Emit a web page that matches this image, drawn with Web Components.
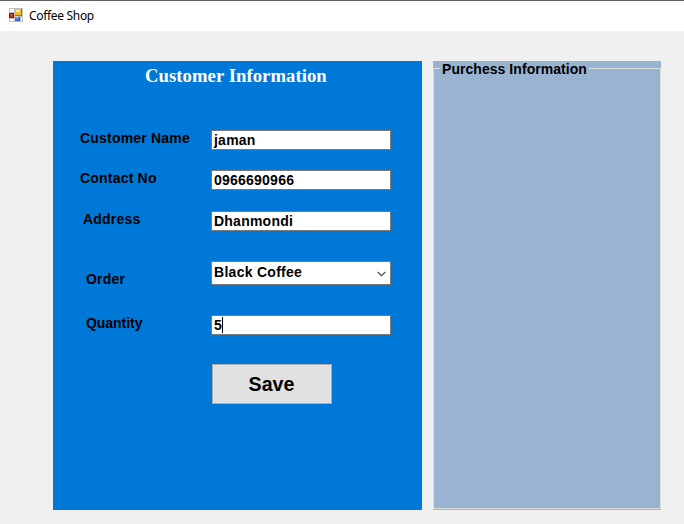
<!DOCTYPE html>
<html lang="en"><head><meta charset="utf-8"><title>Coffee Shop</title>
<style>html,body{margin:0;height:100%;overflow:hidden;background:#f0f0f0}</style></head>
<body><coffee-window></coffee-window>
<script>
const define=(name,html,init)=>customElements.define(name,class extends HTMLElement{
  constructor(){super();const t=document.createElement('template');t.innerHTML=html;
    this.attachShadow({mode:'open'}).append(t.content.cloneNode(true));}
  connectedCallback(){if(init)init(this);}
});

define('title-bar',`<style>
:host{display:flex;height:31px;box-sizing:border-box;border-top:1px solid #626067;background:#fff;padding-left:9px;gap:6px;font:12px/30px "Noto Sans","Open Sans",sans-serif;color:#000}
svg{display:block;margin-top:7px;width:14px;height:14px;flex:none}
span{display:block;white-space:nowrap;letter-spacing:-.32px}
</style>
<svg viewBox="0 0 14 14" shape-rendering="crispEdges">
<rect width="14" height="14" fill="#c0c0c0"/>
<rect x="1" y="1" width="4" height="3" fill="#fff"/><rect x="1" y="11" width="4" height="2" fill="#fff"/><rect x="12" y="9" width="1" height="4" fill="#fff"/>
<rect x="0" y="5" width="5" height="5" fill="#8f1414"/><rect x="1" y="6" width="3" height="3" fill="#d5331f"/><rect x="2" y="6" width="1" height="1" fill="#f08a68"/>
<rect x="6" y="1" width="7" height="7" fill="#a87a08"/><rect x="6" y="1" width="6" height="6" fill="#f4bd24"/><rect x="7" y="2" width="4" height="2" fill="#ffe78e"/>
<rect x="6" y="9" width="5" height="4" fill="#2857b4"/><rect x="6" y="9" width="4" height="3" fill="#4c86e5"/><rect x="7" y="9" width="2" height="1" fill="#9cc3ff"/>
</svg><span><slot></slot></span>`);

define('text-field',`<style>
:host{display:flex;align-items:center;box-sizing:border-box;width:180px;height:20px;border:1px solid #7a7a7a;background:#fff;padding-left:2px;white-space:nowrap;color:#000;font:bold 14px/18px "Liberation Sans",Arial,sans-serif;letter-spacing:.23px}
i{display:none;width:1px;height:16px;background:#000}
:host([focused]) i{display:block}
</style><span><slot></slot></span><i></i>`);

define('select-field',`<style>
:host{display:flex;justify-content:space-between;box-sizing:border-box;width:180px;height:24px;border:1px solid #7a7a7a;background:#fff;padding:0 4px 0 2px;white-space:nowrap;color:#000;font:bold 14px/20px "Liberation Sans",Arial,sans-serif;letter-spacing:.28px}
svg{width:9px;height:6px;margin-top:9px}
</style><span><slot></slot></span>
<svg viewBox="0 0 9 6"><path d="M.6.8 4.5 4.7 8.4.8" fill="none" stroke="#444" stroke-width="1.2"/></svg>`);

define('form-row',`<style>
:host{display:grid;grid-template-columns:131px 180px;align-items:start}
span{font:bold 14px/16px "Liberation Sans",Arial,sans-serif;color:#000;white-space:nowrap;letter-spacing:var(--track,.2px);padding-left:var(--in,0);padding-top:var(--drop,0)}
</style><span></span><slot></slot>`,e=>{e.shadowRoot.querySelector('span').textContent=e.getAttribute('label');});

define('push-button',`<style>
:host{display:flex;align-items:center;justify-content:center;box-sizing:border-box;width:120px;height:40px;border:1px solid #adadad;background:#e1e1e1;color:#000;font:bold 19.6px/22px "Liberation Sans",Arial,sans-serif}
span{padding-right:1px}
</style><span><slot></slot></span>`);

define('customer-panel',`<style>
:host{display:flex;flex-direction:column;box-sizing:border-box;width:369px;height:449px;background:#0078d7;padding-left:27px}
h1{margin:4px 0 0 65px;height:23px;color:#fff;font:bold 18.7px/22px "Liberation Serif","Times New Roman",serif;letter-spacing:.05px;white-space:nowrap}
.name{margin-top:42px}.contact{margin-top:20px}.address{margin-top:21px;--in:3px}
.order{margin-top:30px;--in:6px;--drop:10px}.qty{margin-top:28px;--in:6px;--track:-.05px}
push-button{margin:29px 0 0 132px}
</style>
<h1>Customer Information</h1>
<form-row class="name" label="Customer Name"><text-field>jaman</text-field></form-row>
<form-row class="contact" label="Contact No"><text-field>0966690966</text-field></form-row>
<form-row class="address" label="Address"><text-field>Dhanmondi</text-field></form-row>
<form-row class="order" label="Order"><select-field>Black Coffee</select-field></form-row>
<form-row class="qty" label="Quantity"><text-field focused>5</text-field></form-row>
<push-button>Save</push-button>`);

define('group-panel',`<style>
:host{display:flex;flex-direction:column;box-sizing:border-box;width:228px;height:449px;background:#99b4d1;padding-bottom:1px}
header{display:grid;grid-template-columns:7px auto 1fr;height:16px;font:bold 14px/16px "Liberation Sans",Arial,sans-serif;letter-spacing:.05px;color:#000;white-space:nowrap}
i{border:solid #dcdcdc;border-width:1px 0 0;margin-top:7px}
i:first-child{border-left-width:1px}i:last-child{border-right-width:1px}
span{padding:0 2px}
section{flex:1;border:1px solid #dcdcdc;border-top:0}
</style><header><i></i><span><slot></slot></span><i></i></header><section></section>`);

define('coffee-window',`<style>
:host{display:flex;flex-direction:column;width:684px;height:524px;background:#f0f0f0}
main{display:flex;gap:11px;padding:30px 0 0 53px}
</style><title-bar>Coffee Shop</title-bar><main><customer-panel></customer-panel><group-panel>Purchess Information</group-panel></main>`);
</script></body></html>
